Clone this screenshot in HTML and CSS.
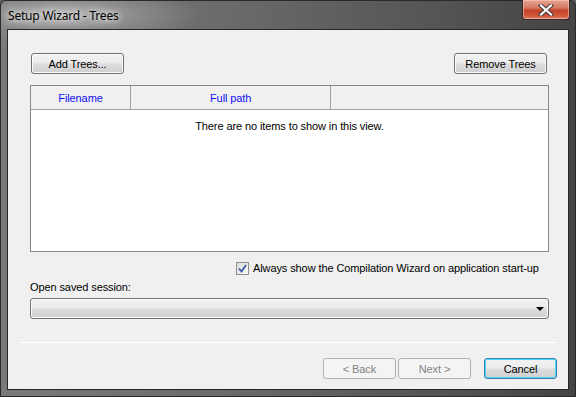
FILE: index.html
```html
<!DOCTYPE html>
<html lang="en">

<head>
  <meta charset="UTF-8">
  <meta name="viewport" content="width=device-width, initial-scale=1.0">
  <title>Setup Wizard - Trees</title>
  <link rel="stylesheet" href="styles.css">
</head>

<body>
  <div class="window">
    <!-- title bar -->
    <div class="titlebar">
      <span class="title">Setup Wizard - Trees</span>
      <div class="close-btn">
        <svg width="16" height="12" viewBox="0 0 16 12">
          <path d="M3 1.5 L13 10.5 M13 1.5 L3 10.5" stroke="#4a3a3a" stroke-width="4.2" stroke-linecap="square"/>
          <path d="M3 1.5 L13 10.5 M13 1.5 L3 10.5" stroke="#ffffff" stroke-width="2.2" stroke-linecap="square"/>
        </svg>
      </div>
    </div>

    <!-- client area -->
    <div class="client">
      <div class="toolbar">
        <button class="btn btn-wide">Add Trees...</button>
        <button class="btn btn-wide">Remove Trees</button>
      </div>

      <div class="listview">
        <div class="list-header">
          <div class="col col-name">Filename</div>
          <div class="col col-path">Full path</div>
        </div>
        <div class="list-body">There are no items to show in this view.</div>
      </div>

      <label class="check-row">
        <span class="checkbox">
          <svg width="9" height="9" viewBox="0 0 9 9">
            <path d="M1 4.5 L3.5 7.5 L8 1" fill="none" stroke="#3c5aa8" stroke-width="1.8"/>
          </svg>
        </span>
        Always show the Compilation Wizard on application start-up
      </label>

      <div class="session-label">Open saved session:</div>
      <div class="combo">
        <span class="combo-arrow"></span>
      </div>

      <div class="separator"></div>

      <div class="footer">
        <button class="btn btn-nav" disabled>&lt; Back</button>
        <button class="btn btn-nav" disabled>Next &gt;</button>
        <button class="btn btn-nav btn-default">Cancel</button>
      </div>
    </div>
  </div>
</body>

</html>
```

FILE: styles.css
```css
* {
  margin: 0;
  padding: 0;
  box-sizing: border-box;
}

body {
  font-family: Tahoma, "Liberation Sans", Arial, sans-serif;
  font-size: 11px;
  letter-spacing: -0.1px;
  color: #000;
  background-color: #5f5f5f;
}

/* window frame */
.window {
  width: 576px;
  height: 397px;
  display: flex;
  flex-direction: column;
  border: 1px solid #2a2a2a;
  border-radius: 6px 6px 0 0;
  background: radial-gradient(ellipse 140px 30px at 60px 14px, #b4b4b4 0%, #8a8a8a 55%, rgba(110, 110, 110, 0) 100%),
    linear-gradient(to right, #7a7a7a 0%, #6a6a6a 40%, #555 75%, #444 100%);
}

.titlebar {
  height: 28px;
  display: flex;
  justify-content: space-between;
  align-items: flex-start;
}

.title {
  font-family: "Noto Sans", "Open Sans", sans-serif;
  font-size: 12px;
  letter-spacing: -0.2px;
  padding: 6px 0 0 7px;
  color: #000;
  text-shadow: 0 0 6px #fff, 0 0 10px #ddd;
}

.close-btn {
  width: 48px;
  height: 20px;
  margin-right: 5px;
  margin-top: -1px;
  border: 1px solid #3b2a28;
  border-top: none;
  border-radius: 0 0 4px 4px;
  background: linear-gradient(to bottom, #e8a594 0%, #d77b63 40%, #c2432a 55%, #cf5a3c 85%, #e0866a 100%);
  box-shadow: inset 0 0 0 1px rgba(255, 210, 200, 0.5);
  display: flex;
  justify-content: center;
  align-items: center;
}

.client {
  flex: 1;
  margin: 0 6px 6px 6px;
  border: 1px solid #262626;
  background-color: #f0f0f0;
  display: flex;
  flex-direction: column;
}

/* buttons */
.btn {
  font-family: Tahoma, "Liberation Sans", Arial, sans-serif;
  font-size: 11px;
  letter-spacing: -0.1px;
  height: 21px;
  border: 1px solid #707070;
  border-radius: 3px;
  color: #000;
  background: linear-gradient(to bottom, #f2f2f2 0%, #ebebeb 48%, #dddddd 52%, #cfcfcf 100%);
  box-shadow: inset 0 0 0 1px #fcfcfc;
}

.btn:disabled {
  color: #838383;
  border-color: #adb2b5;
  background: #f4f4f4;
  box-shadow: none;
}

.btn-default {
  border-color: #3c7fb1;
  box-shadow: inset 0 0 0 1px #48d8fb;
}

.btn-wide {
  width: 93px;
}

.toolbar {
  display: flex;
  justify-content: space-between;
  margin: 23px 21px 0 23px;
}

/* list view */
.listview {
  margin: 11px 19px 0 22px;
  height: 167px;
  border: 1px solid #828790;
  background-color: #fff;
  display: flex;
  flex-direction: column;
}

.list-header {
  height: 24px;
  display: flex;
  background-color: #f0f0f0;
  border-bottom: 1px solid #a0a0a0;
}

.col {
  height: 100%;
  border-right: 1px solid #a0a0a0;
  color: #1010f0;
  display: flex;
  align-items: center;
}

.col-name {
  width: 100px;
  justify-content: center;
}

.col-path {
  width: 200px;
  padding-left: 79px;
}

.list-body {
  text-align: center;
  padding-top: 10px;
}

/* checkbox */
.check-row {
  display: flex;
  align-items: center;
  gap: 4px;
  margin: 9px 0 0 228px;
  height: 14px;
}

.checkbox {
  width: 13px;
  height: 13px;
  border: 1px solid #8f8f8f;
  background: linear-gradient(135deg, #dcdcdc 0%, #fafafa 100%);
  display: flex;
  justify-content: center;
  align-items: center;
}

.session-label {
  margin: 6px 0 0 22px;
}

.combo {
  margin: 5px 19px 0 22px;
  height: 21px;
  border: 1px solid #707070;
  border-radius: 3px;
  background: linear-gradient(to bottom, #f2f2f2 0%, #ebebeb 48%, #dddddd 52%, #cfcfcf 100%);
  box-shadow: inset 0 0 0 1px #fcfcfc;
  display: flex;
  justify-content: flex-end;
  align-items: center;
  padding-right: 4px;
}

.combo-arrow {
  width: 0;
  height: 0;
  border-left: 4px solid transparent;
  border-right: 4px solid transparent;
  border-top: 4px solid #000;
}

.separator {
  margin: 23px 11px 0 11px;
  height: 1px;
  background-color: #a0a0a0;
  border-bottom: 1px solid #fff;
}

.footer {
  display: flex;
  justify-content: flex-end;
  gap: 2px;
  margin: 15px 11px 0 0;
}

.btn-nav {
  width: 73px;
}

.btn-default {
  margin-left: 11px;
}
```
